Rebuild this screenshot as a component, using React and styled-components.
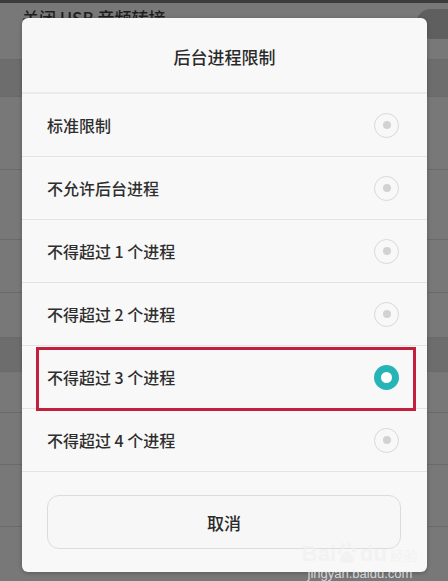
import React from "react";
import styled, { createGlobalStyle } from "styled-components";

const Global = createGlobalStyle`
  html, body { margin: 0; padding: 0; }
  body {
    width: 448px; height: 581px; overflow: hidden;
    font-family: "Noto Sans CJK SC", "Noto Sans", sans-serif;
    background: #767676;
  }
`;

const Screen = styled.div`
  position: relative;
  width: 448px;
  height: 581px;
  overflow: hidden;
  background: #777;
`;

const StatusEdge = styled.div`
  height: 3px;
  background: #3c3c3c;
`;

const BgList = styled.div`
  display: flex;
  flex-direction: column;
`;

const BgRow = styled.div`
  height: ${(p) => p.h}px;
  background: ${(p) => (p.dark ? "#6d6d6d" : "#787878")};
  border-bottom: 1px solid #6a6a6a;
  display: flex;
  align-items: flex-start;
  justify-content: space-between;
  padding: 0 0 0 22px;
  box-sizing: border-box;
  color: #1e1e1e;
  font-size: 17px;
  font-weight: 500;
`;

const BgLabel = styled.span`
  margin-top: 1px;
  line-height: 28px;
`;

const BgToggle = styled.div`
  width: 46px;
  height: 30px;
  border-radius: 15px;
  background: #5f5f5f;
  margin: 6px -14px 0 0;
`;

const Dialog = styled.div`
  position: absolute;
  left: 22px;
  top: 18px;
  width: 405px;
  height: 554px;
  background: #f8f8f8;
  border-radius: 6px;
  box-shadow: 0 1px 4px rgba(0, 0, 0, 0.25);
  display: flex;
  flex-direction: column;
  overflow: hidden;
`;

const Title = styled.div`
  height: 76px;
  display: flex;
  align-items: center;
  justify-content: center;
  font-size: 17px;
  font-weight: 500;
  color: #2a2a2a;
  border-bottom: 2px solid #ebebeb;
  padding-top: 2px;
  box-sizing: border-box;
`;

const Options = styled.div`
  display: flex;
  flex-direction: column;
`;

const Row = styled.div`
  position: relative;
  height: 63px;
  box-sizing: border-box;
  border-bottom: 1px solid #e3e3e3;
  display: flex;
  align-items: center;
  justify-content: space-between;
  padding: 0 28px 0 25px;
  font-size: 16px;
  font-weight: 500;
  color: #2e2e2e;
`;

const Highlight = styled.div`
  position: absolute;
  left: 14px;
  right: 11px;
  top: 1px;
  bottom: -3px;
  border: 3px solid #c11f3b;
`;

const Radio = styled.div`
  width: 25px;
  height: 25px;
  border-radius: 50%;
  box-sizing: border-box;
  display: flex;
  align-items: center;
  justify-content: center;
  border: ${(p) => (p.on ? "7px solid #27b4b6" : "1.5px solid #d9d9d9")};
  background: ${(p) => (p.on ? "#ffffff" : "transparent")};
  &::after {
    content: "";
    width: 8px;
    height: 8px;
    border-radius: 50%;
    background: #d2d2d2;
    display: ${(p) => (p.on ? "none" : "block")};
  }
`;

const Footer = styled.div`
  flex: 1;
  padding: 23px 26px 0 25px;
`;

const CancelButton = styled.div`
  height: 54px;
  border: 1px solid #dcdcdc;
  border-radius: 12px;
  background: #f7f7f7;
  box-sizing: border-box;
  display: flex;
  align-items: center;
  justify-content: center;
  font-size: 17px;
  font-weight: 500;
  color: #2a2a2a;
`;

const Watermark = styled.div`
  position: absolute;
  right: 30px;
  bottom: 0;
  display: flex;
  flex-direction: column;
  align-items: center;
  color: rgba(255, 255, 255, 0.85);
  font-family: "Liberation Sans", Arial, sans-serif;
  line-height: 1;
`;

const Mark = styled.div`
  display: flex;
  align-items: flex-end;
  font-size: 22px;
  font-weight: bold;
  color: rgba(240, 240, 240, 0.75);
`;

const MarkCjk = styled.span`
  font-family: "Noto Sans CJK SC", sans-serif;
  font-size: 14px;
  font-weight: normal;
  margin-left: 3px;
  margin-bottom: 3px;
`;

const MarkUrl = styled.div`
  font-size: 13px;
  color: rgba(240, 240, 240, 0.8);
  margin-top: 2px;
  margin-bottom: 1px;
`;

const options = [
  "标准限制",
  "不允许后台进程",
  "不得超过 1 个进程",
  "不得超过 2 个进程",
  "不得超过 3 个进程",
  "不得超过 4 个进程",
];

const bgRows = [
  { h: 57, label: "关闭 USB 音频转接", toggle: true },
  { h: 37, dark: true },
  { h: 73 },
  { h: 70 },
  { h: 53 },
  { h: 45 },
  { h: 34, dark: true },
  { h: 41 },
  { h: 52 },
  { h: 62 },
  { h: 60 },
];

export default function App() {
  return (
    <Screen>
      <Global />
      <StatusEdge />
      <BgList>
        {bgRows.map((r, i) => (
          <BgRow key={i} h={r.h} dark={r.dark}>
            {r.label && <BgLabel>{r.label}</BgLabel>}
            {r.toggle && <BgToggle />}
          </BgRow>
        ))}
      </BgList>
      <Dialog>
        <Title>后台进程限制</Title>
        <Options>
          {options.map((o, i) => (
            <Row key={o}>
              <span>{o}</span>
              <Radio on={i === 4} />
              {i === 4 && <Highlight />}
            </Row>
          ))}
        </Options>
        <Footer>
          <CancelButton>取消</CancelButton>
        </Footer>
      </Dialog>
      <Watermark>
        <Mark>
          Bai
          <svg width="22" height="22" viewBox="0 0 22 22" style={{ margin: "0 1px 2px" }}>
            <g fill="rgba(240,240,240,0.75)">
              <ellipse cx="6" cy="5" rx="2.2" ry="3" />
              <ellipse cx="12" cy="4" rx="2.2" ry="3" />
              <ellipse cx="3" cy="11" rx="2" ry="2.6" />
              <ellipse cx="17" cy="9" rx="2" ry="2.6" />
              <path d="M10 10c3 0 7 6 7 9s-3 3-7 3-7 0-7-3 4-9 7-9z" />
            </g>
          </svg>
          du
          <MarkCjk>经验</MarkCjk>
        </Mark>
        <MarkUrl>jingyan.baidu.com</MarkUrl>
      </Watermark>
    </Screen>
  );
}
